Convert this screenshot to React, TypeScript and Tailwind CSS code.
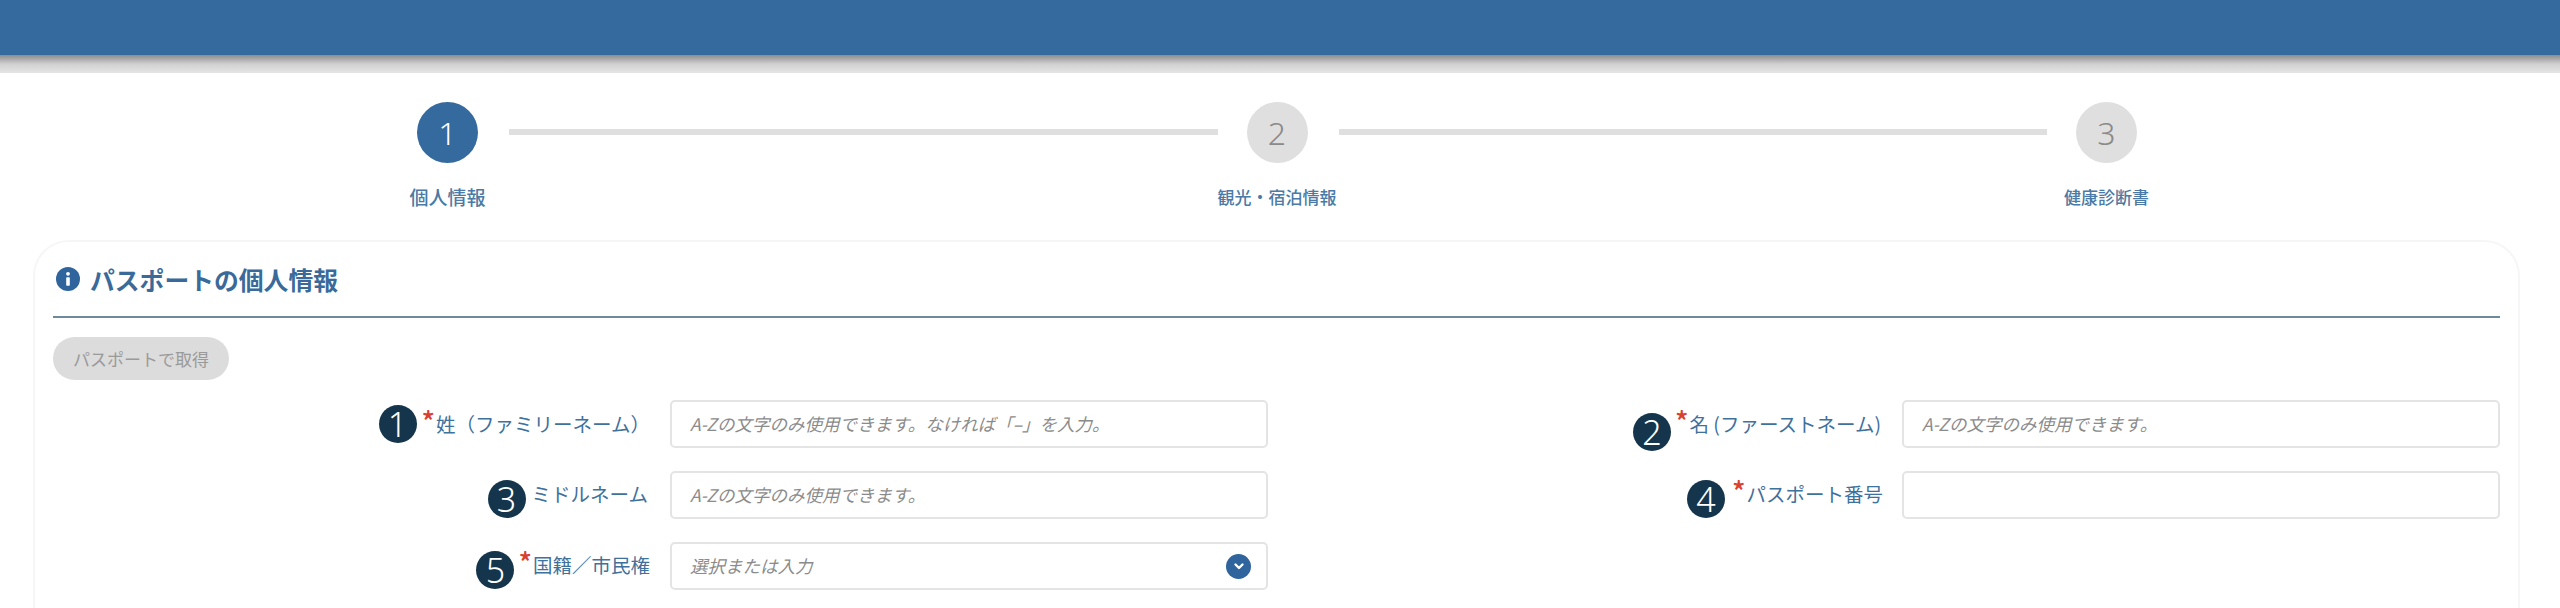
const font = "font-['Noto_Sans_CJK_JP','Noto_Sans',sans-serif]";

function Star() {
  return <span className="mb-[9px] mr-[1px] text-[28px] leading-none font-medium text-[#d8402f]">*</span>;
}

function NumberDot({ n, className }: { n: number; className?: string }) {
  return (
    <div className={`flex h-[38px] w-[38px] shrink-0 items-center justify-center rounded-full bg-[#15354c] text-[34px] leading-none font-light text-white font-['Noto_Sans',sans-serif] ${className ?? ''}`}>
      {n}
    </div>
  );
}

function Field({
  n,
  label,
  required,
  placeholder,
  select,
  dotClass,
  labelEnd,
}: {
  n: number;
  label: string;
  required?: boolean;
  placeholder?: string;
  select?: boolean;
  dotClass?: string;
  labelEnd: string;
}) {
  return (
    <div className="flex h-[48px] items-center justify-end">
      <NumberDot n={n} className={dotClass} />
      <div className={`flex items-center text-[19.5px] leading-none text-[#3f719d] ${labelEnd}`}>
        {required && <Star />}
        <span className="whitespace-nowrap">{label}</span>
      </div>
      <div className="flex h-[48px] w-[598px] shrink-0 items-center rounded-[5px] border-2 border-[#e4e4e4] bg-white pl-[18px] pr-[15px]">
        <input
          readOnly
          placeholder={placeholder}
          className="w-full bg-transparent text-[17.5px] outline-none [text-spacing-trim:space-all] placeholder:italic placeholder:text-[#8b8b8b]"
        />
        {select && (
          <span className="flex h-[25px] w-[25px] shrink-0 items-center justify-center rounded-full bg-[#2f659c]">
            <svg viewBox="0 0 12 12" className="h-[12px] w-[12px]" fill="none" stroke="#fff" strokeWidth="2.4" strokeLinecap="round" strokeLinejoin="round">
              <path d="M2.5 4.5 6 8l3.5-3.5" />
            </svg>
          </span>
        )}
      </div>
    </div>
  );
}

function Step({ n, label, active, labelClass }: { n: number; label: string; active?: boolean; labelClass: string }) {
  return (
    <div className="flex w-[61px] shrink-0 flex-col items-center">
      <div
        className={`flex h-[61px] w-[61px] items-center justify-center rounded-full font-['Noto_Sans',sans-serif] text-[32px] font-light ${
          active ? 'bg-[#356a9e] text-white' : 'bg-[#dfdfdf] text-[#8a8a8a]'
        }`}
      >
        {n}
      </div>
      <div className={`mt-[21px] whitespace-nowrap leading-[26px] font-medium text-[#4a7aa5] ${labelClass}`}>{label}</div>
    </div>
  );
}

function StepLine() {
  return <div className="ml-[31px] mr-[29px] mt-[27px] h-[6px] flex-1 bg-[#dfdfdf]" />;
}

export default function App() {
  return (
    <div className={`h-[608px] w-[2560px] overflow-hidden bg-white ${font}`}>
      <div className="h-[55px] bg-[#356a9e]" />
      <div className="h-[18px] bg-gradient-to-b from-[#8c8c8c] via-[#d0d0d0] to-[#e6e6e6]" />

      {/* stepper */}
      <div className="ml-[417px] flex w-[1720px] items-start pt-[29px]">
        <Step n={1} label="個人情報" active labelClass="text-[19px]" />
        <StepLine />
        <Step n={2} label="観光・宿泊情報" labelClass="text-[17px]" />
        <StepLine />
        <Step n={3} label="健康診断書" labelClass="text-[17px]" />
      </div>

      {/* card */}
      <div className="ml-[33px] mr-[40px] mt-[30px] h-[400px] rounded-[36px] border-2 border-[#f6f6f6] px-[18px]">
        <div className="flex h-[76px] items-center gap-[10px] pl-[3px] border-b-2 border-[#6c8a9c]">
          <svg viewBox="0 0 24 24" className="h-[24px] w-[24px] shrink-0">
            <circle cx="12" cy="12" r="12" fill="#2f659c" />
            <circle cx="12" cy="6.8" r="1.9" fill="#fff" />
            <rect x="10.2" y="10.2" width="3.6" height="8.6" rx="0.8" fill="#fff" />
          </svg>
          <h2 className="text-[24.8px] leading-none font-bold text-[#3a6a99]">パスポートの個人情報</h2>
        </div>

        <button className="mt-[19px] flex h-[43px] w-[176px] items-center justify-center rounded-full bg-[#dcdcdc] text-[17px] text-[#9a9a9a]">
          パスポートで取得
        </button>

        <div className="mt-[20px] grid grid-cols-[1215px_1232px] gap-y-[23px]">
          <Field
            n={1}
            label="姓（ファミリーネーム）"
            required
            placeholder="A-Zの文字のみ使用できます。なければ「–」を入力。"
            labelEnd="ml-[5px] mr-[20px]"
          />
          <Field
            n={2}
            label="名 (ファーストネーム)"
            required
            placeholder="A-Zの文字のみ使用できます。"
            dotClass="mt-[16px]"
            labelEnd="ml-[4px] mr-[21px]"
          />
          <Field n={3} label="ミドルネーム" placeholder="A-Zの文字のみ使用できます。" dotClass="mt-[8px]" labelEnd="ml-[6px] mr-[22px] mb-[2px]" />
          <Field n={4} label="パスポート番号" required dotClass="mt-[8px]" labelEnd="ml-[7px] mr-[19px] mb-[2px]" />
          <Field n={5} label="国籍／市民権" required placeholder="選択または入力" select dotClass="mt-[8px]" labelEnd="ml-[4px] mr-[20px] mb-[2px]" />
        </div>
      </div>
    </div>
  );
}
